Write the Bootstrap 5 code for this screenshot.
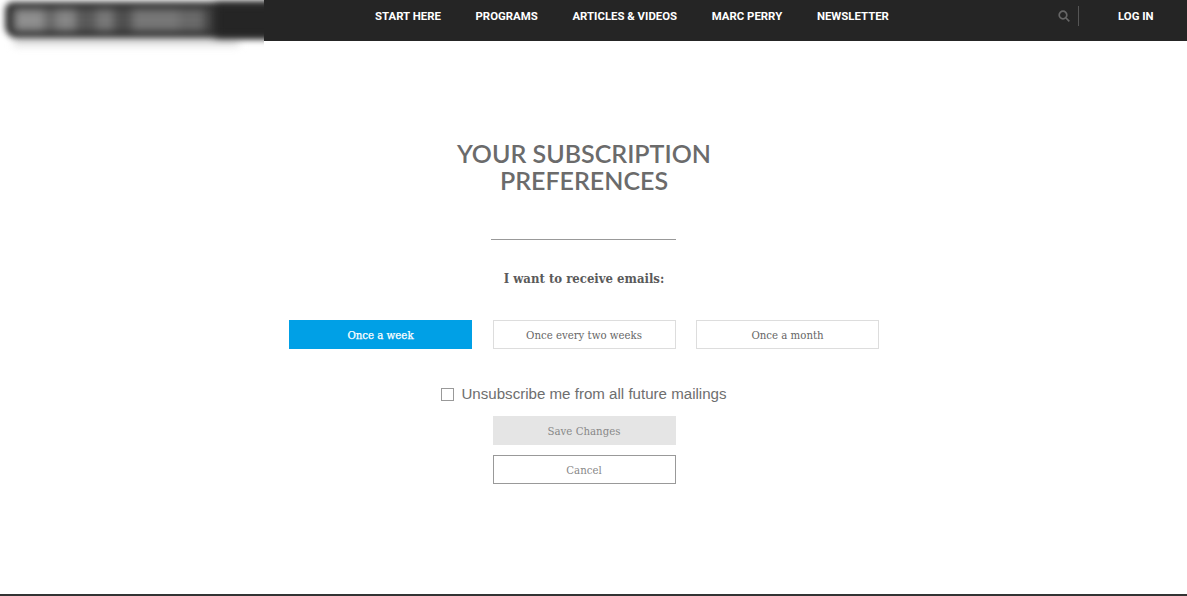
<!DOCTYPE html>
<html lang="en"><head><meta charset="utf-8"><title>Subscription preferences</title>
<link href="https://cdn.jsdelivr.net/npm/bootstrap@5.3.0/dist/css/bootstrap.min.css" rel="stylesheet">
<style>
html,body{height:596px;overflow:hidden;background:#fff}
.page-wrap{height:596px;display:flex;flex-direction:column;border-bottom:2px solid #333}
.top-bar{height:41px;background:#252525;position:relative;flex:none}
.logo-clip{position:absolute;left:0;top:0;width:264px;height:60px;overflow:hidden;background:#fff}
.logo-shade{position:absolute;left:14px;top:38px;width:225px;height:7px;background:#d4d4d4;filter:blur(4px)}
.logo-smear{position:absolute;left:5px;top:2px;width:300px;height:36px;background:#333;filter:blur(3px);border-radius:8px 0 0 12px}
.logo-text{position:absolute;left:14px;top:9px;width:200px;height:22px;filter:blur(4px);background:linear-gradient(90deg,#8f8f8f 0 30px,#6a6a6a 30px 42px,#868686 42px 62px,#5a5a5a 62px 82px,#787878 82px 100px,#505050 100px 118px,#777 118px 165px,#6a6a6a 165px 190px,#454545 190px 200px)}
.logo-dark{position:absolute;left:215px;top:4px;width:60px;height:33px;background:#252525;filter:blur(4px)}
.main-links{position:absolute;left:375px;top:10px;display:flex;gap:34.7px}
.main-links a,.login-link{font:700 11.4px/12px Roboto,sans-serif;color:#fff;text-decoration:none;white-space:nowrap}
.right-tools{position:absolute;left:1058px;top:6px;display:flex;align-items:center;height:20px}
.tool-sep{width:1px;height:20px;background:#555;margin-left:8px;margin-right:39px}
.content-col{display:flex;flex-direction:column;align-items:center;width:590px;margin-left:289px}
.pref-title{font:600 25px/27px Lato,sans-serif;color:#6b6b6b;text-align:center;margin:99px 0 0;width:300px}
.title-rule{width:185px;height:1px;background:#999;margin-top:45px;margin-bottom:30px;flex:none;margin-left:-1px}
.pref-lead{font:700 13px/18px "DejaVu Serif",serif;font-stretch:condensed;color:#5a5a5a;margin:0 0 32px}
.choice-row{display:flex;gap:20.5px;margin-bottom:36px}
.pick{width:183px;height:29px;font:400 10.2px/29px "DejaVu Serif",serif;text-align:center;border:1px solid #ddd;color:#666;background:#fff;padding:0;border-radius:0}
.pick.on{background:#00a0e6;border-color:#00a0e6;color:#fff;-webkit-text-stroke:.25px #fff}
.unsub-line{display:flex;align-items:center;gap:7px;font:400 15.1px/18px "Liberation Sans",sans-serif;color:#6e6e6e;margin-bottom:13px}
.unsub-box{width:13px;height:13px;border:1px solid #999;background:#fff;flex:none}
.act{width:183px;height:29px;font:400 10.2px/29px "DejaVu Serif",serif;text-align:center;padding:0;border-radius:0;color:#888}
.act-save{background:#e5e5e5;border:1px solid #e5e5e5;margin-bottom:10px}
.act-cancel{background:#fff;border:1px solid #999}
</style></head>
<body>
<div class="page-wrap">
<header class="top-bar">
 <div class="logo-clip" aria-hidden="true"><div class="logo-shade"></div><div class="logo-smear"></div><div class="logo-text"></div><div class="logo-dark"></div></div>
 <nav class="main-links"><a href="#">START HERE</a><a href="#">PROGRAMS</a><a href="#">ARTICLES &amp; VIDEOS</a><a href="#">MARC PERRY</a><a href="#">NEWSLETTER</a></nav>
 <div class="right-tools">
  <svg width="12" height="12" viewBox="0 0 12 12" fill="none" stroke="#666" stroke-width="1.7"><circle cx="5" cy="5" r="3.8"/><path d="M8 8l3.3 3.3"/></svg>
  <span class="tool-sep"></span><a class="login-link" href="#">LOG IN</a>
 </div>
</header>
<main class="content-col">
 <h1 class="pref-title">YOUR SUBSCRIPTION PREFERENCES</h1>
 <div class="title-rule"></div>
 <p class="pref-lead">I want to receive emails:</p>
 <div class="choice-row">
  <button class="btn pick on" type="button">Once a week</button>
  <button class="btn pick" type="button">Once every two weeks</button>
  <button class="btn pick" type="button">Once a month</button>
 </div>
 <div class="unsub-line"><span class="unsub-box"></span><span>Unsubscribe me from all future mailings</span></div>
 <button class="btn act act-save" type="button">Save Changes</button>
 <button class="btn act act-cancel" type="button">Cancel</button>
</main>
</div>
<script src="https://cdn.jsdelivr.net/npm/bootstrap@5.3.0/dist/js/bootstrap.bundle.min.js"></script>
</body></html>
